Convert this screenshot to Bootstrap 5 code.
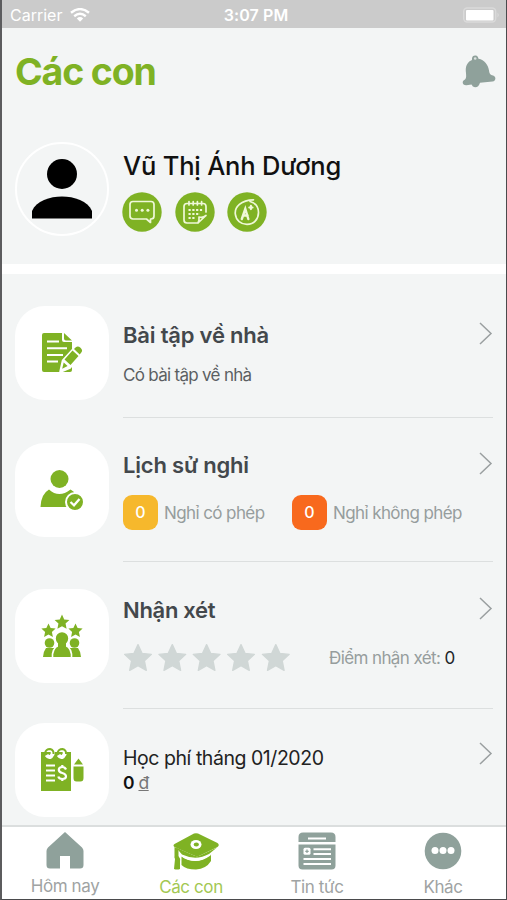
<!DOCTYPE html>
<html lang="vi">
<head>
<meta charset="utf-8">
<meta name="viewport" content="width=device-width, initial-scale=1">
<title>Các con</title>
<link href="https://cdn.jsdelivr.net/npm/bootstrap@5.3.0/dist/css/bootstrap.min.css" rel="stylesheet">
<style>
:root{--leaf:#7fb224;--slate:#8fa19b;--ink:#43484c}
body{font-family:Inter,"Noto Sans",sans-serif;background:#f3f5f5;line-height:1}
.phone{height:900px;border-left:2px solid #5c5c5e;border-right:1px solid #4a4a4c;border-bottom:1px solid #4a4a4c;overflow:hidden}
.phone svg{display:block;flex:none}
.statusbar{height:28px;background:#cbcbcb;color:#fff;display:grid;grid-template-columns:1fr auto 1fr;padding:2px 6px 0 8px;font-size:16px}
.clock{font-weight:600;letter-spacing:.1px;padding-left:2px}
.titlebar{height:88px;padding-left:13px;padding-right:10px}
.page-title{font-size:37.5px;font-weight:700;color:var(--leaf);line-height:1;letter-spacing:-1.15px}
.profile{height:148px;padding:26px 14px 0 13px;gap:14px}
.profile-text{padding-top:11px}
.avatar{width:94px;height:94px;border:2px solid #fff;border-radius:50%;flex:none}
.person-name{font-size:25.5px;font-weight:500;color:#111;line-height:26px;white-space:nowrap;letter-spacing:-.18px}
.badges{gap:12.5px;margin-top:13px;margin-left:-1px}
.band{height:10px;background:#fff}
.entry{padding:0 13px 0 13px;gap:14px}
.entry-1,.entry-2{height:144px}.entry-3{height:147px}.entry-4{height:116px}
.tile{width:94px;height:94px;border-radius:30px;background:#fff;flex:none}
.entry-1 .tile{margin-top:32px}.entry-2 .tile{margin-top:25px}.entry-3 .tile{margin-top:27px}.entry-4 .tile{margin-top:14px}
.detail{border-bottom:1px solid #dcdfdf}
.entry-1 .detail{padding-top:46px}.entry-2 .detail{padding-top:32px}.entry-3 .detail{padding-top:33px}.entry-4 .detail{padding-top:36px;border:0}
.chev{margin-top:-3px}
.entry-4 .chev{margin-top:-3px}
.entry-title{font-size:22px;font-weight:600;color:var(--ink);line-height:30px;white-space:nowrap;letter-spacing:-.2px}
.entry-3 .entry-title{letter-spacing:-.3px}
.sub-text{font-size:17px;color:#5b5f62;line-height:20px;margin-top:15px;letter-spacing:-.7px}
.muted-text{font-size:17px;color:#969d9d;white-space:nowrap;letter-spacing:-.6px;line-height:20px}
.counter{width:35px;height:35px;border-radius:9px;color:#fff;font-size:16px;font-weight:500}
.counter-a{background:#f6b82c}.counter-b{background:#f8691d}
.leave{margin-top:14.5px}.leave-col{width:169px}.leave-label{margin-left:6px;padding-top:1px}
.rating{margin-top:18px}.score{margin-left:38px}
.fee{font-size:19.5px;color:#222;line-height:26px;white-space:nowrap;letter-spacing:-.45px}
.amount{font-size:17.5px;line-height:24px;color:#777;letter-spacing:-.5px}
.amount b{color:#111;font-weight:600}
.tabbar{height:74px;border-top:2px solid #dbdede;background:#fff}
.tab-item{width:126px;color:#a0a3a3;font-size:17px;text-decoration:none;letter-spacing:-.4px}
.tab-item svg{height:38px;margin-top:5px}
.tab-item span{line-height:20px;margin-top:7px}
.tab-item:first-child span{margin-top:6px}
.tab-item.current{color:#a3c853}
.tab-item.current svg{margin-left:9px}
</style>
<script src="https://cdn.jsdelivr.net/npm/bootstrap@5.3.0/dist/js/bootstrap.bundle.min.js"></script>
</head>
<body>
<svg width="0" height="0" class="d-none"><defs>
<path id="star" d="M0-10 3-3.5 10-2.7 4.8 2.1 6.2 9.2 0 5.7-6.2 9.2-4.8 2.1-10-2.7-3-3.5Z"/>
</defs></svg>
<main class="phone d-flex flex-column">
  <header class="statusbar align-items-center">
    <div class="d-flex align-items-center gap-2"><span>Carrier</span>
      <svg width="20" height="14" viewBox="0 0 20 14" fill="none" stroke="#fff" stroke-width="2.4"><path d="M1 4.8Q10-2.6 19 4.8M4.2 8.2Q10 3.5 15.8 8.2"/><path d="M6.8 10.4Q10 7.6 13.2 10.4L10 13.7Z" fill="#fff" stroke="none"/></svg></div>
    <span class="clock">3:07 PM</span>
    <svg class="ms-auto" width="37" height="16" viewBox="0 0 37 16"><rect x=".7" y="1" width="32" height="14" rx="3.5" fill="none" stroke="#dadada" stroke-width="1.4"/><rect x="3" y="3" width="27.5" height="10.5" rx="1" fill="#fff"/><path d="M34.500 5.500Q37 8 34.500 10.500Z" fill="#dadada"/></svg>
  </header>
  <section class="titlebar d-flex align-items-center justify-content-between">
    <h1 class="page-title mb-0">Các con</h1>
    <svg width="34" height="34" viewBox="0 0 34 34"><path d="M10 5C9.500 1.500 11.500 .3 13.500 .5S16 2 16.500 3.800C22.500 5 26.300 10 27 15.500C27.500 19 28.500 20 31 20.500C34.500 21.500 34 26 30.500 26.400L18 27.800Q16.500 32.500 13 32.300Q10.500 32 9.500 29.600L4.500 30.300C.5 30.600-.5 26.500 2.300 25C4.500 23.500 4.200 21.500 4 18C3 12 5 7 10 5Z" fill="#8fa19b"/><circle cx="13.200" cy="3.500" r="1.300" fill="#dce2e0"/></svg>
  </section>
  <section class="profile d-flex">
    <div class="avatar d-flex align-items-center justify-content-center">
      <svg width="60" height="60" viewBox="0 0 60 60"><circle cx="30" cy="15" r="15"/><path d="M0 59.500V52C4 42 18 37.500 30 37.500S56 42 60 52V59.500Z"/></svg>
    </div>
    <div class="profile-text">
      <div class="person-name">Vũ Thị Ánh Dương</div>
      <div class="badges d-flex">
        <svg width="40" height="40" viewBox="0 0 40 40"><circle cx="20" cy="20" r="19.700" fill="#7fb224"/><path d="M11 9.500H29Q32 9.500 32 12.500V24Q32 27 29 27H28.500V30.500L24.500 27H11Q8 27 8 24V12.500Q8 9.500 11 9.500Z" fill="none" stroke="#eff8d8" stroke-width="1.700" stroke-linejoin="round"/><g fill="#eff8d8"><circle cx="14.500" cy="18.300" r="1.500"/><circle cx="20.200" cy="18.300" r="1.500"/><circle cx="25.900" cy="18.300" r="1.500"/></g></svg>
        <svg width="40" height="40" viewBox="0 0 40 40"><circle cx="20" cy="20" r="19.700" fill="#7fb224"/><g fill="none" stroke="#eff8d8" stroke-width="1.700" stroke-linecap="round" stroke-linejoin="round"><path d="M23 31H12Q9 31 9 28V14.500Q9 11.500 12 11.500H28Q31 11.500 31 14.500V20M23 31Q24.500 28 24 25Q28 26 31 23.500ZM14 9.500V13M18.200 9.500V13M22.400 9.500V13M26.600 9.500V13"/><path d="M13.500 18H27.500M13.500 22H25M13.500 26H21" stroke-width="2" stroke-linecap="butt" stroke-dasharray="2.200 1.600"/></g></svg>
        <svg width="40" height="40" viewBox="0 0 40 40"><circle cx="20" cy="20" r="19.700" fill="#7fb224"/><g fill="none" stroke="#eff8d8" stroke-width="1.700" stroke-linecap="round"><path d="M26.500 7.800C14 8 7.500 15 8.300 22C9 28.500 14 32.300 20 32.300C27 32.300 31.500 27 31.500 20.500C31.500 15 28.500 11 23 9.500"/><path d="M14.800 27 18.300 17 21.300 27M16 23.500H20.600" stroke-width="2.400"/><path d="M22.300 15.500H25.500M23.900 13.900V17.100" stroke-width="2.200"/></g></svg>
      </div>
    </div>
  </section>
  <div class="band flex-shrink-0"></div>

  <article class="entry entry-1 d-flex">
    <div class="tile d-flex align-items-center justify-content-center">
      <svg width="42" height="42" viewBox="0 0 42 42"><path d="M3 1H21V8Q21 10 23 10H31V38Q31 40 29 40H3Q1 40 1 38V3Q1 1 3 1ZM23 1 31 8.500H25Q23 8.500 23 6.500Z" fill="#7fb224"/><path d="M6 9.500H18M6 16.300H26M6 23H22M6 29.500H17" stroke="#fff" stroke-width="2"/><path d="M19.500 39.500 22 28.500 33 16.500 40 22.500 29 35.500Z" fill="#fff" stroke="#fff" stroke-width="2.500" stroke-linejoin="round"/><path d="M23.500 27.500 31.500 18.500 37.500 24 29.500 33ZM33 17 34.800 15.200Q37 13.500 39.500 15.700Q42.200 18.200 40.300 20.500L38.700 22.500ZM21.200 36.800 22.700 30.500 26.600 34Z" fill="#7fb224"/></svg>
    </div>
    <div class="detail flex-grow-1">
      <div class="d-flex justify-content-between align-items-center"><h2 class="entry-title mb-0">Bài tập về nhà</h2><svg class="chev" width="14" height="24" viewBox="0 0 14 24" fill="none" stroke="#9a9fa0" stroke-width="1.500"><path d="M1 1 12 11.500 1 22"/></svg></div>
      <p class="sub-text mb-0">Có bài tập về nhà</p>
    </div>
  </article>

  <article class="entry entry-2 d-flex">
    <div class="tile d-flex align-items-center justify-content-center">
      <svg width="44" height="42" viewBox="0 0 44 42"><g fill="#7fb224"><circle cx="19.500" cy="10" r="9"/><path d="M.5 38Q1 25 9 20.500Q19 29.500 30.500 20.500L34 23V38Z"/><circle cx="35" cy="33" r="9" stroke="#fff" stroke-width="2"/></g><path d="M30.500 33 34 36.300 39.500 30" fill="none" stroke="#fff" stroke-width="2.300"/></svg>
    </div>
    <div class="detail flex-grow-1">
      <div class="d-flex justify-content-between align-items-center"><h2 class="entry-title mb-0">Lịch sử nghỉ</h2><svg class="chev" width="14" height="24" viewBox="0 0 14 24" fill="none" stroke="#9a9fa0" stroke-width="1.500"><path d="M1 1 12 11.500 1 22"/></svg></div>
      <div class="leave d-flex align-items-center">
        <div class="leave-col d-flex align-items-center"><span class="counter counter-a d-flex align-items-center justify-content-center">0</span><span class="muted-text leave-label">Nghỉ có phép</span></div>
        <div class="d-flex align-items-center"><span class="counter counter-b d-flex align-items-center justify-content-center">0</span><span class="muted-text leave-label">Nghỉ không phép</span></div>
      </div>
    </div>
  </article>

  <article class="entry entry-3 d-flex">
    <div class="tile d-flex align-items-center justify-content-center">
      <svg width="42" height="44" viewBox="0 0 42 44"><g fill="#7fb224"><use href="#star" transform="translate(21 8) scale(.74)"/><use href="#star" transform="translate(7.500 16.500) scale(.71)"/><use href="#star" transform="translate(34.500 16.500) scale(.71)"/><circle cx="8.500" cy="29" r="4.800"/><circle cx="33.500" cy="29" r="4.800"/><path d="M2 43Q2 38 5 34H13V43ZM29 43V34H37Q40 38 40 43Z"/><g stroke="#fff" stroke-width="1.600"><path d="M11.500 43.800V40Q13 31 21 31T30.500 40V43.800Z"/><circle cx="21" cy="24.500" r="7"/></g><path d="M17 29H25V34H17Z"/></g><path d="M0 43H42V44H0Z" fill="#fff"/></svg>
    </div>
    <div class="detail flex-grow-1">
      <div class="d-flex justify-content-between align-items-center"><h2 class="entry-title mb-0">Nhận xét</h2><svg class="chev" width="14" height="24" viewBox="0 0 14 24" fill="none" stroke="#9a9fa0" stroke-width="1.500"><path d="M1 1 12 11.500 1 22"/></svg></div>
      <div class="rating d-flex align-items-center">
        <svg width="168" height="30" viewBox="0 0 168 30" fill="#d0d7d6" stroke="#d0d7d6" stroke-linejoin="round"><use href="#star" transform="translate(15 15) scale(1.340)"/><use href="#star" transform="translate(49.300 15) scale(1.340)"/><use href="#star" transform="translate(83.600 15) scale(1.340)"/><use href="#star" transform="translate(118 15) scale(1.340)"/><use href="#star" transform="translate(152.800 15) scale(1.340)"/></svg>
        <span class="muted-text score">Điểm nhận xét: <span class="text-dark">0</span></span>
      </div>
    </div>
  </article>

  <article class="entry entry-4 d-flex">
    <div class="tile d-flex align-items-center justify-content-center">
      <svg width="44" height="44" viewBox="0 0 44 44"><path d="M1 4H31V43H1Z" fill="#7fb224"/><g fill="none" stroke="#fff" stroke-width="4"><path d="M6.500 7Q8.500 10 11 8.500Q15 4 10.500 2M18.500 7Q20.500 10 23 8.500Q27 4 22.500 2"/></g><g fill="none" stroke="#7fb224" stroke-width="2"><path d="M5 5Q6 1 10 1Q14 2 13.500 6M17.500 5Q18.500 1 22.500 1Q26.500 2 26 6"/></g><path d="M6 17.500H15M6 22.500H15M6 27.500H15M6 32.500H15" stroke="#fff" stroke-width="2"/><path d="M26 21.500Q25 19 22.300 19Q18.800 19 18.800 21.800Q18.800 24.300 22.300 25Q26 25.800 26 28.500Q26 31 22.300 31Q19 31 18.300 28.500M22.300 17V19M22.300 31V33" fill="none" stroke="#fff" stroke-width="2.200"/><path d="M33.500 18.500H43.500V30Q43.500 33.500 40.500 33.500H36.500Q33.500 33.500 33.500 30ZM34 16.500 38.500 10.500 43 16.500Z" fill="#7fb224"/></svg>
    </div>
    <div class="detail flex-grow-1 d-flex justify-content-between align-items-start">
      <div><div class="fee">Học phí tháng 01/2020</div><div class="amount"><b>0</b> <span class="text-decoration-underline">đ</span></div></div>
      <svg class="chev" width="14" height="24" viewBox="0 0 14 24" fill="none" stroke="#9a9fa0" stroke-width="1.500"><path d="M1 1 12 11.500 1 22"/></svg>
    </div>
  </article>

  <nav class="tabbar d-flex flex-shrink-0">
    <a class="tab-item d-flex flex-column align-items-center" href="#"><svg width="38" viewBox="0 0 38 38"><path d="M19 0 36 15.500Q37.500 17 37.500 19V33Q37.500 36.500 34 36.500H24V24H14V36.500H4Q.5 36.500 .5 33V19Q.5 17 2 15.500Z" fill="#8fa19b"/></svg><span>Hôm nay</span></a>
    <a class="tab-item current d-flex flex-column align-items-center" href="#"><svg width="46" viewBox="0 0 46 38"><g fill="#7fb224"><path d="M21 1.500Q23 .8 25 1.500L44.500 11Q47 13 44.500 15L27 23.500Q24 25 21 23.500L1.500 15Q-.5 13.500 1.500 12Z"/><path d="M8.500 24.500Q23 34 38 22.500V29Q33 37 23 37.500Q13 37.500 8.500 33Z"/><path d="M1.500 15 5.500 17V24Q7.500 26 7 30V37Q4 38 1 37L2 27Q1 25 1.500 24Z"/></g><path d="M8.500 20.500Q23 30 37.500 20.500V23.500Q23 34 8.500 24.500Z" fill="#fff"/><path d="M3 15.500 21 23.500Q24 25 27 23.500L44 15.500L36 22Q23 29 9 22.500Z" fill="#7fb224"/><ellipse cx="23" cy="12.500" rx="5.500" ry="4.500" fill="#fff"/><ellipse cx="23.300" cy="12.500" rx="2.600" ry="1.900" fill="#7fb224"/></svg><span>Các con</span></a>
    <a class="tab-item d-flex flex-column align-items-center" href="#"><svg width="38" viewBox="0 0 38 38"><path d="M5 .5H33Q37.500 .5 37.500 5V10H.5V5Q.5 .5 5 .5ZM.5 12.500H37.500V33.500Q37.500 37.500 33.500 37.500H4.500Q.5 37.500 .5 33.500Z" fill="#8fa19b"/><path d="M10 6.500H28M15.500 17.200H33M15.500 22H33M5.500 27H33M5.500 32H33" stroke="#fff" stroke-width="2"/><rect x="5.500" y="15.800" width="7" height="7" rx="1.500" fill="#fff"/><path d="M9 17.500V21M7.300 19.300H10.700" stroke="#8fa19b" stroke-width="1.200"/></svg><span>Tin tức</span></a>
    <a class="tab-item d-flex flex-column align-items-center" href="#"><svg width="38" viewBox="0 0 38 38"><circle cx="19" cy="19" r="18.300" fill="#8fa19b"/><g fill="#fff"><circle cx="11" cy="18.500" r="3.500"/><circle cx="19" cy="18.500" r="3.500"/><circle cx="27" cy="18.500" r="3.500"/></g></svg><span>Khác</span></a>
  </nav>
</main>
</body>
</html>
